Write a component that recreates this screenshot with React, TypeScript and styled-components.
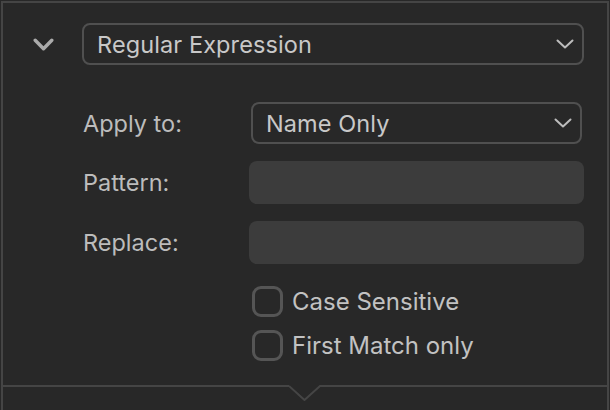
import React from "react";
import styled, { createGlobalStyle } from "styled-components";

const Global = createGlobalStyle`
  html, body { margin: 0; padding: 0; background: #282828; }
  body { font-family: Inter, "Noto Sans", sans-serif; -webkit-font-smoothing: antialiased; }
  * { box-sizing: border-box; }
`;

const Panel = styled.div`
  margin: 1px 0 0 1px;
  width: 608px;
  height: 409px;
  border: 2px solid #454545;
  border-bottom: none;
  display: flex;
  flex-direction: column;
`;

const Header = styled.div`
  display: flex;
  align-items: center;
  padding: 20px 23px 0 0;
`;

const Disclosure = styled.div`
  width: 79px;
  display: flex;
  justify-content: center;
  padding-left: 1px;
`;

const SelectBox = styled.div<{ $inset?: number }>`
  flex: 1;
  height: 42px;
  margin: 0 ${(p) => p.$inset ?? 0}px;
  border: 2px solid #505050;
  border-radius: 8px;
  display: flex;
  align-items: center;
  justify-content: space-between;
  padding: 0 8px 0 13px;
  color: #c8c8c8;
  font-size: 23.5px;
  letter-spacing: 0.1px;
`;

const Form = styled.div`
  display: grid;
  grid-template-columns: 166px 335px;
  align-items: center;
  padding: 37px 0 0 80px;
`;

const Label = styled.div<{ $mt: number }>`
  margin-top: ${(p) => p.$mt}px;
  color: #bcbcbc;
  font-size: 23.5px;
  letter-spacing: 0;
`;

const FieldSlot = styled.div<{ $mt: number }>`
  display: flex;
  margin-top: ${(p) => p.$mt}px;
`;

const TextField = styled.div`
  flex: 1;
  height: 43px;
  background: #3c3c3c;
  border-radius: 8px;
`;

const Checks = styled.div`
  display: flex;
  flex-direction: column;
  gap: 13px;
  padding: 22px 0 0 249px;
`;

const CheckRow = styled.label`
  display: flex;
  align-items: center;
  gap: 9px;
  color: #c2c2c2;
  font-size: 24px;
  letter-spacing: 0;
`;

const Box = styled.span`
  width: 31px;
  height: 31px;
  border: 3px solid #555555;
  border-radius: 9px;
`;

const Divider = styled.div`
  margin-top: 24px;
  display: flex;
  align-items: flex-start;
  height: 16px;
`;

const Rule = styled.div`
  flex: 1;
  height: 2px;
  background: #454545;
`;

const Chevron = ({ w, h, sw, color }: { w: number; h: number; sw: number; color: string }) => (
  <svg width={w} height={h} viewBox={`0 0 ${w} ${h}`} fill="none">
    <polyline
      points={`${sw / 2 + 0.5},${sw / 2 + 0.5} ${w / 2},${h - sw / 2 - 0.5} ${w - sw / 2 - 0.5},${sw / 2 + 0.5}`}
      stroke={color}
      strokeWidth={sw}
      strokeLinecap="round"
      strokeLinejoin="round"
    />
  </svg>
);

const Notch = () => (
  <svg width="32" height="16" viewBox="0 0 32 16">
    <polyline points="0,1 15.5,15 31,1 32,1" fill="none" stroke="#454545" strokeWidth="2" />
  </svg>
);

const rows = [
  { label: "Apply to:", kind: "select", value: "Name Only", mt: 0 },
  { label: "Pattern:", kind: "text", mt: 17 },
  { label: "Replace:", kind: "text", mt: 17 },
];

export default function App() {
  return (
    <>
      <Global />
      <Panel>
        <Header>
          <Disclosure>
            <Chevron w={21} h={13} sw={3.4} color="#ababab" />
          </Disclosure>
          <SelectBox>
            <span>Regular Expression</span>
            <Chevron w={18} h={10} sw={2} color="#bdbdbd" />
          </SelectBox>
        </Header>
        <Form>
          {rows.map((r) => (
            <React.Fragment key={r.label}>
              <Label $mt={r.mt}>{r.label}</Label>
              <FieldSlot $mt={r.mt}>
                {r.kind === "select" ? (
                  <SelectBox $inset={2}>
                    <span>{r.value}</span>
                    <Chevron w={18} h={10} sw={2} color="#bdbdbd" />
                  </SelectBox>
                ) : (
                  <TextField />
                )}
              </FieldSlot>
            </React.Fragment>
          ))}
        </Form>
        <Checks>
          <CheckRow>
            <Box />
            Case Sensitive
          </CheckRow>
          <CheckRow>
            <Box />
            First Match only
          </CheckRow>
        </Checks>
        <Divider>
          <Rule />
          <Notch />
          <Rule />
        </Divider>
      </Panel>
    </>
  );
}
